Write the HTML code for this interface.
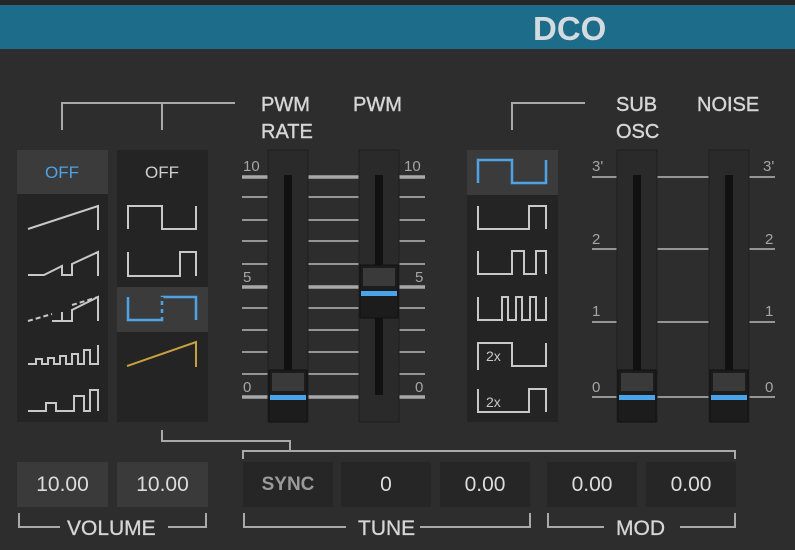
<!DOCTYPE html>
<html><head><meta charset="utf-8"><style>
body{margin:0;width:795px;height:550px;overflow:hidden;background:#2d2d2e;font-family:"Liberation Sans",sans-serif;}
.a{position:absolute}
.top{left:0;top:0;width:795px;height:5px;background:#262626}
.hdr{left:0;top:5px;width:795px;height:44px;background:#1c6c8a;}
.hdr span{position:absolute;left:533px;top:5px;font-size:33px;font-weight:bold;color:#d3dbe0}
.lbl{color:#d6d6d6;font-size:20px;line-height:27px;-webkit-text-stroke:0.4px #d6d6d6}
.box{height:45px;line-height:45px;text-align:center;color:#dcdcdc;font-size:21px;background:#262626}
.blab{color:#d6d6d6;font-size:21px;background:#2d2d2e;padding:0 5px;-webkit-text-stroke:0.3px #d6d6d6}
</style></head><body>
<div class="a top"></div>
<div class="a hdr"><span>DCO</span></div>
<div class="a lbl" style="left:261px;top:92px">PWM<br>RATE</div>
<div class="a lbl" style="left:353px;top:92px">PWM</div>
<div class="a lbl" style="left:616px;top:92px">SUB<br>OSC</div>
<div class="a lbl" style="left:697px;top:92px">NOISE</div>

<svg class="a" style="left:0;top:0" width="795" height="550" viewBox="0 0 795 550">
<g stroke="#a9a9a9" stroke-width="2" fill="none">
<path d="M62,130V103H235M162,103V130"/>
<path d="M512,130V103H585"/>
<path d="M162,430V441H290V451M243,459V451H735V459"/>
<path d="M19,513V527H60M168,527H206V513"/>
<path d="M244,513V527H346M420,527H530V513"/>
<path d="M548,513V527H604M680,527H735V513"/>
</g>
<rect x="17" y="150" width="91" height="272" fill="#242424"/>
<rect x="17" y="150" width="91" height="44" fill="#3b3b3c"/>
<rect x="117" y="150" width="91" height="272" fill="#242424"/>
<rect x="117" y="287" width="91" height="45" fill="#3b3b3c"/>
<text x="62" y="178" fill="#4ea3e6" font-size="17" text-anchor="middle" font-family="Liberation Sans">OFF</text>
<text x="162" y="178" fill="#cfcfcf" font-size="17" text-anchor="middle" font-family="Liberation Sans">OFF</text>
<g stroke="#c8c8c8" stroke-width="2" fill="none">
<path d="M28,229L98,206V230"/>
<path d="M28,275H44L62,266V275H72V264L98,252V276"/>
<path d="M52,321H62V312V321H72V310L98,297V321" />
<path d="M28,364H36V359H42V364H48V358H54V364H60V356H66V364H72V354H78V364H84V350H90V364H98V345V364"/>
<path d="M28,411H46V403H56V411H74V396H84V411H90V390H98V411"/>
<path d="M128,229V206H162V229H196V206"/>
<path d="M128,252V276H180V252H196V276"/>
</g>
<path d="M28,321L52,314M72,305L98,297" stroke="#c8c8c8" stroke-width="2" stroke-dasharray="5 3"/>
<g stroke="#4ea3e6" stroke-width="2.5" fill="none">
<path d="M128,297V320H162V297H196V320"/>
</g>
<path d="M162,297V320" stroke="#3b3b3c" stroke-width="3" stroke-dasharray="4 4"/>
<path d="M127,366L196,342V367" stroke="#c9a040" stroke-width="2" fill="none"/>
<g stroke="#959595" stroke-width="2">
<path d="M242,197H268M308,197H360M399,197H425"/>
<path d="M242,220H268M308,220H360M399,220H425"/>
<path d="M242,241H268M308,241H360M399,241H425"/>
<path d="M242,264H268M308,264H360M399,264H425"/>
<path d="M242,308H268M308,308H360M399,308H425"/>
<path d="M242,330H268M308,330H360M399,330H425"/>
<path d="M242,352H268M308,352H360M399,352H425"/>
<path d="M242,374H268M308,374H360M399,374H425"/>
<path d="M592,177H617M657,177H709M749,177H775"/>
<path d="M592,249H617M657,249H709M749,249H775"/>
<path d="M592,322H617M657,322H709M749,322H775"/>
<path d="M592,397H617M657,397H709M749,397H775"/>
</g>
<g stroke="#a8a8a8" stroke-width="3.5">
<path d="M242,177H268M308,177H360M399,177H425"/>
<path d="M242,287H268M308,287H360M399,287H425"/>
<path d="M242,397H268M308,397H360M399,397H425"/>
</g>
<g fill="#a5a5a5" font-size="15" font-family="Liberation Sans">
<text x="243" y="171">10</text><text x="243" y="282">5</text><text x="243" y="392">0</text>
<text x="404" y="171">10</text><text x="415" y="282">5</text><text x="415" y="392">0</text>
<text x="592" y="171">3'</text><text x="592" y="244">2</text><text x="592" y="316">1</text><text x="592" y="392">0</text>
<text x="763" y="171">3'</text><text x="765" y="244">2</text><text x="765" y="316">1</text><text x="765" y="392">0</text>
</g>
<g>
<rect x="268" y="150" width="40" height="272" fill="#2a2a2a" stroke="#1e1e1e"/>
<rect x="284" y="175" width="8" height="225" fill="#111"/>
<rect x="359" y="150" width="40" height="272" fill="#2a2a2a" stroke="#1e1e1e"/>
<rect x="375" y="175" width="8" height="220" fill="#111"/>
<rect x="617" y="150" width="40" height="272" fill="#2a2a2a" stroke="#1e1e1e"/>
<rect x="633" y="175" width="8" height="225" fill="#111"/>
<rect x="709" y="150" width="40" height="272" fill="#2a2a2a" stroke="#1e1e1e"/>
<rect x="725" y="175" width="8" height="225" fill="#111"/>
</g>
<g>
<rect x="269" y="370" width="38" height="52" fill="#1c1c1c" stroke="#111"/>
<rect x="272" y="373" width="32" height="18" fill="#3a3a3a"/>
<rect x="270" y="395" width="36" height="5" fill="#4aa4ea"/>
<rect x="360" y="265" width="38" height="53" fill="#1c1c1c" stroke="#111"/>
<rect x="363" y="268" width="32" height="18" fill="#3a3a3a"/>
<rect x="361" y="291" width="36" height="5" fill="#4aa4ea"/>
<rect x="618" y="370" width="38" height="52" fill="#1c1c1c" stroke="#111"/>
<rect x="621" y="373" width="32" height="18" fill="#3a3a3a"/>
<rect x="619" y="395" width="36" height="5" fill="#4aa4ea"/>
<rect x="710" y="370" width="38" height="52" fill="#1c1c1c" stroke="#111"/>
<rect x="713" y="373" width="32" height="18" fill="#3a3a3a"/>
<rect x="711" y="395" width="36" height="5" fill="#4aa4ea"/>
</g>
<rect x="467" y="150" width="91" height="272" fill="#242424"/>
<rect x="467" y="150" width="91" height="45" fill="#3b3b3c"/>
<path d="M478,183V160H512V183H546V160" stroke="#4ea3e6" stroke-width="2.5" fill="none"/>
<g stroke="#c8c8c8" stroke-width="2" fill="none">
<path d="M478,206V229H529V206H546V229"/>
<path d="M478,251V274H512V251H524V274H536V251H546V274"/>
<path d="M478,297V320H502V297H508V320H516V297H522V320H530V297H536V320H546V297"/>
<path d="M478,370V343H512V366H546V343"/>
<path d="M478,389V412H529V389H546V412"/>
</g>
<g fill="#c8c8c8" font-size="14" font-family="Liberation Sans"><text x="486" y="361">2x</text><text x="486" y="407">2x</text></g>
</svg>

<div class="a box" style="left:17px;top:462px;width:91px;background:#3a3a3b">10.00</div>
<div class="a box" style="left:117px;top:462px;width:91px;background:#3a3a3b">10.00</div>
<div class="a box" style="left:243px;top:462px;width:90px;color:#9a9a9a;font-weight:bold;font-size:19px">SYNC</div>
<div class="a box" style="left:341px;top:462px;width:90px">0</div>
<div class="a box" style="left:440px;top:462px;width:90px">0.00</div>
<div class="a box" style="left:547px;top:462px;width:90px">0.00</div>
<div class="a box" style="left:646px;top:462px;width:90px">0.00</div>
<div class="a blab" style="left:62px;top:517px">VOLUME</div>
<div class="a blab" style="left:353px;top:517px">TUNE</div>
<div class="a blab" style="left:611px;top:517px">MOD</div>
</body></html>
